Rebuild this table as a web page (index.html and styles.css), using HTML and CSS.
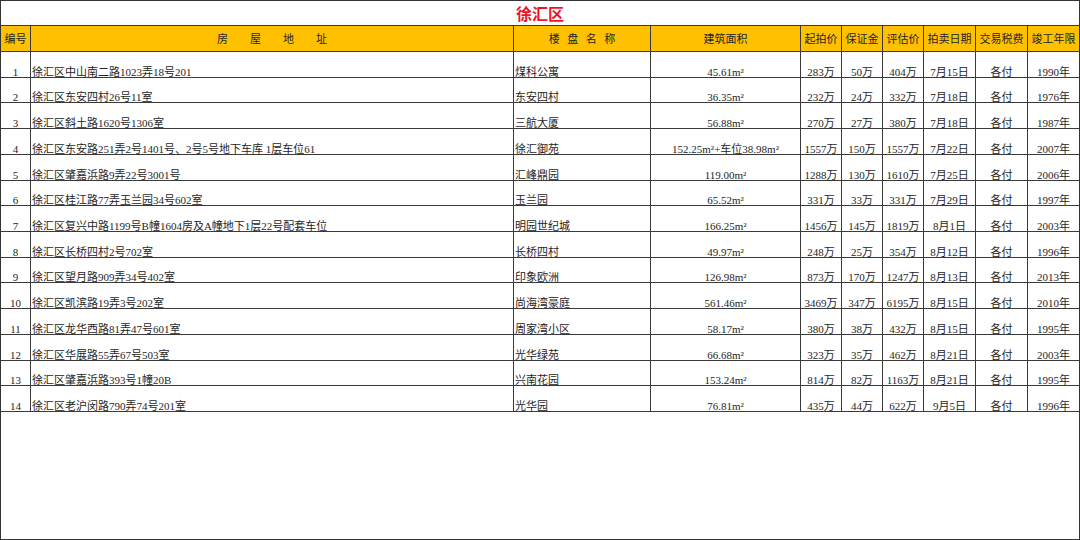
FILE: index.html
```html
<!DOCTYPE html>
<html lang="zh-CN">
<head>
<meta charset="utf-8">
<title>徐汇区</title>
<link rel="stylesheet" href="styles.css">
</head>
<body>
<div class="sheet">
<table class="grid">
<colgroup>
<col class="c-no"><col class="c-addr"><col class="c-name"><col class="c-area"><col class="c-s"><col class="c-s"><col class="c-s"><col class="c-m"><col class="c-m"><col class="c-last">
</colgroup>
<thead>
<tr class="title-row"><th colspan="10" class="title">徐汇区</th></tr>
<tr class="head-row">
<th>编号</th>
<th>房　　屋　　地　　址</th>
<th class="spaced">楼盘名称</th>
<th>建筑面积</th>
<th>起拍价</th>
<th>保证金</th>
<th>评估价</th>
<th>拍卖日期</th>
<th>交易税费</th>
<th class="last">竣工年限</th>
</tr>
</thead>
<tbody>
<tr><td class="ctr">1</td><td class="left">徐汇区中山南二路1023弄18号201</td><td class="left">煤科公寓</td><td class="ctr">45.61m²</td><td class="ctr">283万</td><td class="ctr">50万</td><td class="ctr">404万</td><td class="ctr">7月15日</td><td class="ctr">各付</td><td class="ctr last">1990年</td></tr>
<tr><td class="ctr">2</td><td class="left">徐汇区东安四村26号11室</td><td class="left">东安四村</td><td class="ctr">36.35m²</td><td class="ctr">232万</td><td class="ctr">24万</td><td class="ctr">332万</td><td class="ctr">7月18日</td><td class="ctr">各付</td><td class="ctr last">1976年</td></tr>
<tr><td class="ctr">3</td><td class="left">徐汇区斜土路1620号1306室</td><td class="left">三航大厦</td><td class="ctr">56.88m²</td><td class="ctr">270万</td><td class="ctr">27万</td><td class="ctr">380万</td><td class="ctr">7月18日</td><td class="ctr">各付</td><td class="ctr last">1987年</td></tr>
<tr><td class="ctr">4</td><td class="left">徐汇区东安路251弄2号1401号、2号5号地下车库 1层车位61</td><td class="left">徐汇御苑</td><td class="ctr">152.25m²+车位38.98m²</td><td class="ctr">1557万</td><td class="ctr">150万</td><td class="ctr">1557万</td><td class="ctr">7月22日</td><td class="ctr">各付</td><td class="ctr last">2007年</td></tr>
<tr><td class="ctr">5</td><td class="left">徐汇区肇嘉浜路9弄22号3001号</td><td class="left">汇峰鼎园</td><td class="ctr">119.00m²</td><td class="ctr">1288万</td><td class="ctr">130万</td><td class="ctr">1610万</td><td class="ctr">7月25日</td><td class="ctr">各付</td><td class="ctr last">2006年</td></tr>
<tr><td class="ctr">6</td><td class="left">徐汇区桂江路77弄玉兰园34号602室</td><td class="left">玉兰园</td><td class="ctr">65.52m²</td><td class="ctr">331万</td><td class="ctr">33万</td><td class="ctr">331万</td><td class="ctr">7月29日</td><td class="ctr">各付</td><td class="ctr last">1997年</td></tr>
<tr><td class="ctr">7</td><td class="left">徐汇区复兴中路1199号B幢1604房及A幢地下1层22号配套车位</td><td class="left">明园世纪城</td><td class="ctr">166.25m²</td><td class="ctr">1456万</td><td class="ctr">145万</td><td class="ctr">1819万</td><td class="ctr">8月1日</td><td class="ctr">各付</td><td class="ctr last">2003年</td></tr>
<tr><td class="ctr">8</td><td class="left">徐汇区长桥四村2号702室</td><td class="left">长桥四村</td><td class="ctr">49.97m²</td><td class="ctr">248万</td><td class="ctr">25万</td><td class="ctr">354万</td><td class="ctr">8月12日</td><td class="ctr">各付</td><td class="ctr last">1996年</td></tr>
<tr><td class="ctr">9</td><td class="left">徐汇区望月路909弄34号402室</td><td class="left">印象欧洲</td><td class="ctr">126.98m²</td><td class="ctr">873万</td><td class="ctr">170万</td><td class="ctr">1247万</td><td class="ctr">8月13日</td><td class="ctr">各付</td><td class="ctr last">2013年</td></tr>
<tr><td class="ctr">10</td><td class="left">徐汇区凯滨路19弄3号202室</td><td class="left">尚海湾豪庭</td><td class="ctr">561.46m²</td><td class="ctr">3469万</td><td class="ctr">347万</td><td class="ctr">6195万</td><td class="ctr">8月15日</td><td class="ctr">各付</td><td class="ctr last">2010年</td></tr>
<tr><td class="ctr">11</td><td class="left">徐汇区龙华西路81弄47号601室</td><td class="left">周家湾小区</td><td class="ctr">58.17m²</td><td class="ctr">380万</td><td class="ctr">38万</td><td class="ctr">432万</td><td class="ctr">8月15日</td><td class="ctr">各付</td><td class="ctr last">1995年</td></tr>
<tr><td class="ctr">12</td><td class="left">徐汇区华展路55弄67号503室</td><td class="left">光华绿苑</td><td class="ctr">66.68m²</td><td class="ctr">323万</td><td class="ctr">35万</td><td class="ctr">462万</td><td class="ctr">8月21日</td><td class="ctr">各付</td><td class="ctr last">2003年</td></tr>
<tr><td class="ctr">13</td><td class="left">徐汇区肇嘉浜路393号1幢20B</td><td class="left">兴南花园</td><td class="ctr">153.24m²</td><td class="ctr">814万</td><td class="ctr">82万</td><td class="ctr">1163万</td><td class="ctr">8月21日</td><td class="ctr">各付</td><td class="ctr last">1995年</td></tr>
<tr><td class="ctr">14</td><td class="left">徐汇区老沪闵路790弄74号201室</td><td class="left">光华园</td><td class="ctr">76.81m²</td><td class="ctr">435万</td><td class="ctr">44万</td><td class="ctr">622万</td><td class="ctr">9月5日</td><td class="ctr">各付</td><td class="ctr last">1996年</td></tr>
</tbody>
</table>
</div>
</body>
</html>
```
FILE: styles.css
```css
html, body {
  margin: 0;
  padding: 0;
  background: #ffffff;
}

.sheet {
  width: 1080px;
  height: 540px;
  box-sizing: border-box;
  border: 1px solid #333333;
  background: #ffffff;
  overflow: hidden;
}

.grid {
  width: 1078px;
  table-layout: fixed;
  border-collapse: separate;
  border-spacing: 0;
  font-family: "Liberation Serif", "Noto Sans CJK SC", serif;
  font-size: 11px;
  color: #262626;
}

.c-no { width: 30px; }
.c-addr { width: 483px; }
.c-name { width: 137px; }
.c-area { width: 150px; }
.c-s { width: 41px; }
.c-m { width: 52px; }
.c-last { width: 51px; }

.grid th,
.grid td {
  box-sizing: border-box;
  padding: 0;
  border-right: 1px solid #3a3a3a;
  border-bottom: 1px solid #3a3a3a;
  white-space: nowrap;
  overflow: hidden;
  line-height: 13px;
}

.grid .last {
  border-right: none;
}

.title-row th.title {
  height: 25px;
  border-right: none;
  color: #f0141e;
  font-family: "Noto Sans CJK SC", sans-serif;
  font-size: 16px;
  font-weight: 700;
  text-align: center;
  vertical-align: middle;
  line-height: 20px;
}

.head-row th {
  height: 26px;
  background: #ffc000;
  font-family: "Noto Sans CJK SC", sans-serif;
  font-weight: 400;
  font-size: 11px;
  color: #262626;
  text-align: center;
  vertical-align: middle;
}

.head-row th.spaced {
  letter-spacing: 7.5px;
  text-indent: 7.5px;
}

.grid tbody td {
  height: 25.72px;
  vertical-align: bottom;
  padding-bottom: 0;
  line-height: 9px;
}

.grid td.ctr {
  text-align: center;
}

.grid td.left {
  text-align: left;
  padding-left: 1px;
}
```
